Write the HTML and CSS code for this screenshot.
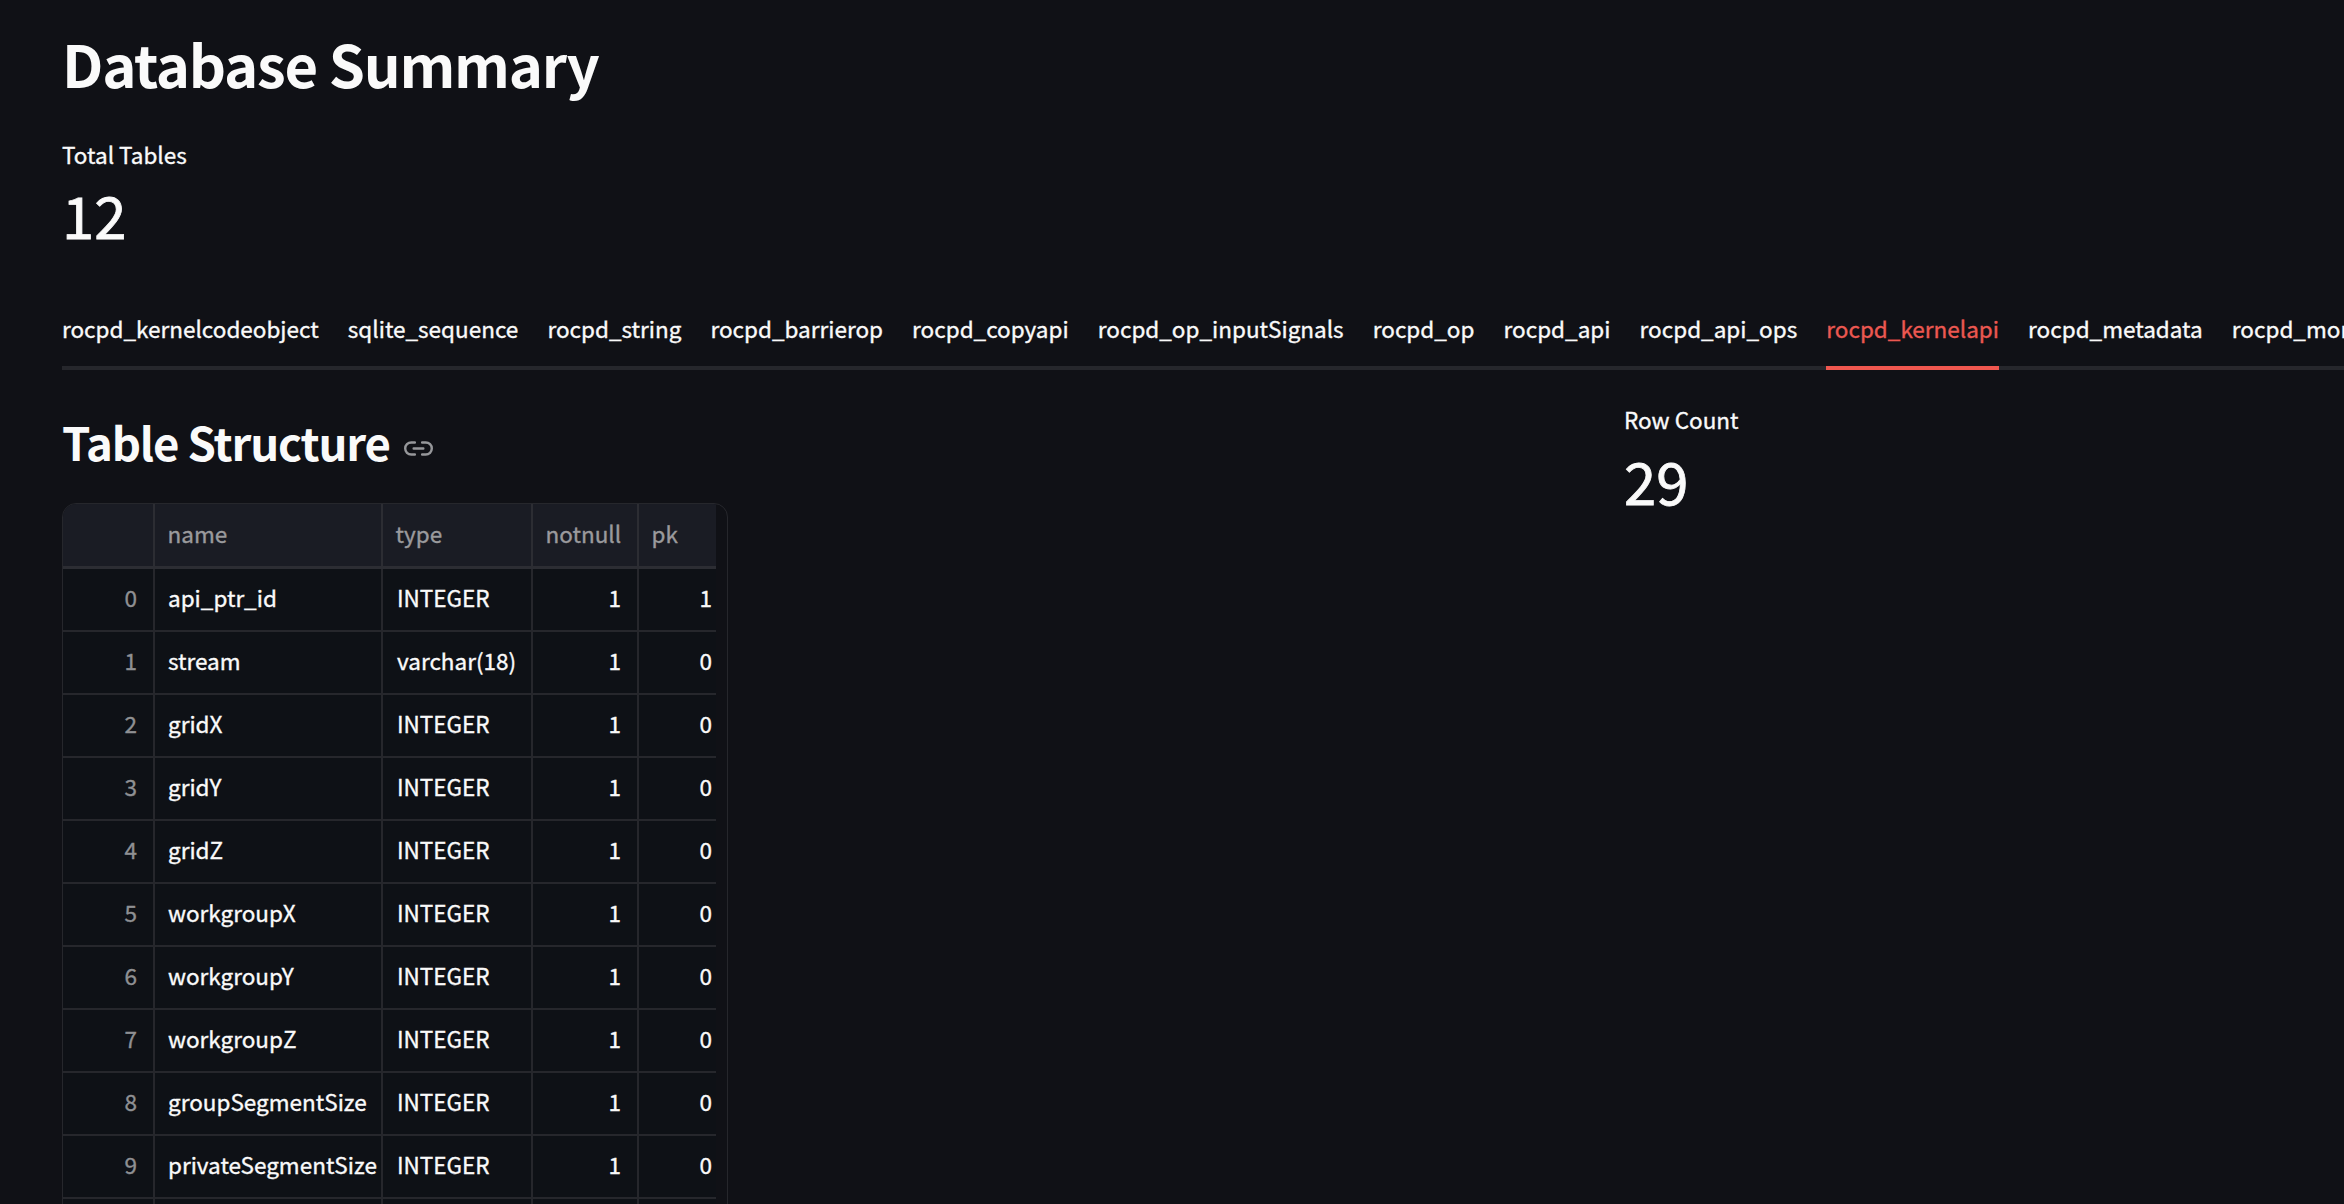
FILE: index.html
```html
<!DOCTYPE html>
<html lang="en">
<head>
<meta charset="utf-8">
<title>Database Summary</title>
<link rel="stylesheet" href="styles.css">
</head>
<body>
<main class="page">
  <h1 class="title">Database Summary</h1>
  <section class="metric">
    <div class="metric-label">Total Tables</div>
    <div class="metric-value">12</div>
  </section>
  <nav class="tabs">
    <a class="tab">rocpd_kernelcodeobject</a>
    <a class="tab">sqlite_sequence</a>
    <a class="tab">rocpd_string</a>
    <a class="tab">rocpd_barrierop</a>
    <a class="tab">rocpd_copyapi</a>
    <a class="tab">rocpd_op_inputSignals</a>
    <a class="tab">rocpd_op</a>
    <a class="tab">rocpd_api</a>
    <a class="tab">rocpd_api_ops</a>
    <a class="tab active">rocpd_kernelapi</a>
    <a class="tab">rocpd_metadata</a>
    <a class="tab">rocpd_monitor</a>
  </nav>
  <div class="columns">
    <section class="structure">
      <h2 class="subtitle"><span>Table Structure</span>
        <svg class="link" viewBox="0 0 24 24"><path d="M15 7h3a5 5 0 0 1 0 10h-3M9 17H6A5 5 0 0 1 6 7h3M8 12h8"/></svg>
      </h2>
      <div class="frame">
        <div class="grid">
          <div class="row head"><span></span><span>name</span><span>type</span><span>notnull</span><span>pk</span></div>
          <div class="row"><span>0</span><span>api_ptr_id</span><span>INTEGER</span><span>1</span><span>1</span></div>
          <div class="row"><span>1</span><span>stream</span><span>varchar(18)</span><span>1</span><span>0</span></div>
          <div class="row"><span>2</span><span>gridX</span><span>INTEGER</span><span>1</span><span>0</span></div>
          <div class="row"><span>3</span><span>gridY</span><span>INTEGER</span><span>1</span><span>0</span></div>
          <div class="row"><span>4</span><span>gridZ</span><span>INTEGER</span><span>1</span><span>0</span></div>
          <div class="row"><span>5</span><span>workgroupX</span><span>INTEGER</span><span>1</span><span>0</span></div>
          <div class="row"><span>6</span><span>workgroupY</span><span>INTEGER</span><span>1</span><span>0</span></div>
          <div class="row"><span>7</span><span>workgroupZ</span><span>INTEGER</span><span>1</span><span>0</span></div>
          <div class="row"><span>8</span><span>groupSegmentSize</span><span>INTEGER</span><span>1</span><span>0</span></div>
          <div class="row"><span>9</span><span>privateSegmentSize</span><span>INTEGER</span><span>1</span><span>0</span></div>
          <div class="row"><span></span><span></span><span></span><span></span><span></span></div>
        </div>
      </div>
    </section>
    <section class="metric count">
      <div class="metric-label">Row Count</div>
      <div class="metric-value">29</div>
    </section>
  </div>
</main>
</body>
</html>
```
FILE: styles.css
```css
* { box-sizing: border-box; }

body {
  margin: 0;
  height: 1204px;
  overflow: hidden;
  background: #101116;
  color: #fafafa;
  font: 22.5px/32px "Noto Sans CJK SC", "Open Sans", sans-serif;
  -webkit-text-stroke: 0.35px currentColor;
}

.page {
  height: 1204px;
  overflow: hidden;
  padding: 28px 0 0 62px;
}

.title {
  margin: 0 0 40px;
  font-size: 58px;
  line-height: 70px;
  font-weight: 700;
  letter-spacing: -1.28px;
  -webkit-text-stroke: 0;
}

.metric-value {
  margin-top: 9px;
  font-size: 58px;
  line-height: 70px;
  -webkit-text-stroke: 0.8px currentColor;
}

.tabs {
  display: flex;
  gap: 29.15px;
  height: 80px;
  margin-top: 41px;
  overflow: hidden;
  box-shadow: inset 0 -4px #26272c;
}

.tab {
  flex: none;
  padding-top: 22px;
  white-space: nowrap;
}

.tab.active {
  color: #ec5851;
  border-bottom: 4px solid #f0574f;
}

.columns {
  display: grid;
  grid-template-columns: 1562px 1fr;
}

.count { padding-top: 33px; }
.count .metric-value { margin-top: 10px; }

.subtitle {
  display: flex;
  align-items: center;
  gap: 14px;
  margin: 43px 0 34px;
  font-size: 45.5px;
  line-height: 56px;
  font-weight: 700;
  letter-spacing: -1.12px;
  -webkit-text-stroke: 0;
}

.link {
  width: 29px;
  height: 29px;
  margin-top: 14px;
  fill: none;
  stroke: #96979a;
  stroke-width: 2;
  stroke-linecap: round;
}

.frame {
  width: 666px;
  height: 730px;
  border: 1px solid #26272c;
  border-radius: 14px;
  overflow: hidden;
}

.grid { width: 653px; }

.row {
  display: grid;
  grid-template-columns: 92px 228px 150px 106px 77px;
  height: 63px;
  background: #0e1116;
  border-bottom: 2px solid #26272c;
}

.row > span {
  padding: 12px 16px 0 13px;
  border-right: 2px solid #26272c;
  text-align: right;
  white-space: nowrap;
}

.row > span:nth-child(2),
.row > span:nth-child(3) {
  padding-right: 0;
  text-align: left;
}

.row > span:nth-child(3) { padding-left: 14px; }

.row > span:first-child { color: #8f9093; }

.row > span:last-child {
  padding-right: 4px;
  border-right: 0;
}

.head {
  height: 65px;
  background: #1a1c24;
  border-bottom: 3px solid #2c2d33;
  color: #9a9a9d;
}

.head > span {
  padding-top: 13px;
  border-color: #2c2d33;
}

.head > span:nth-child(n) {
  padding-left: 12.5px;
  padding-right: 0;
  text-align: left;
}
```
